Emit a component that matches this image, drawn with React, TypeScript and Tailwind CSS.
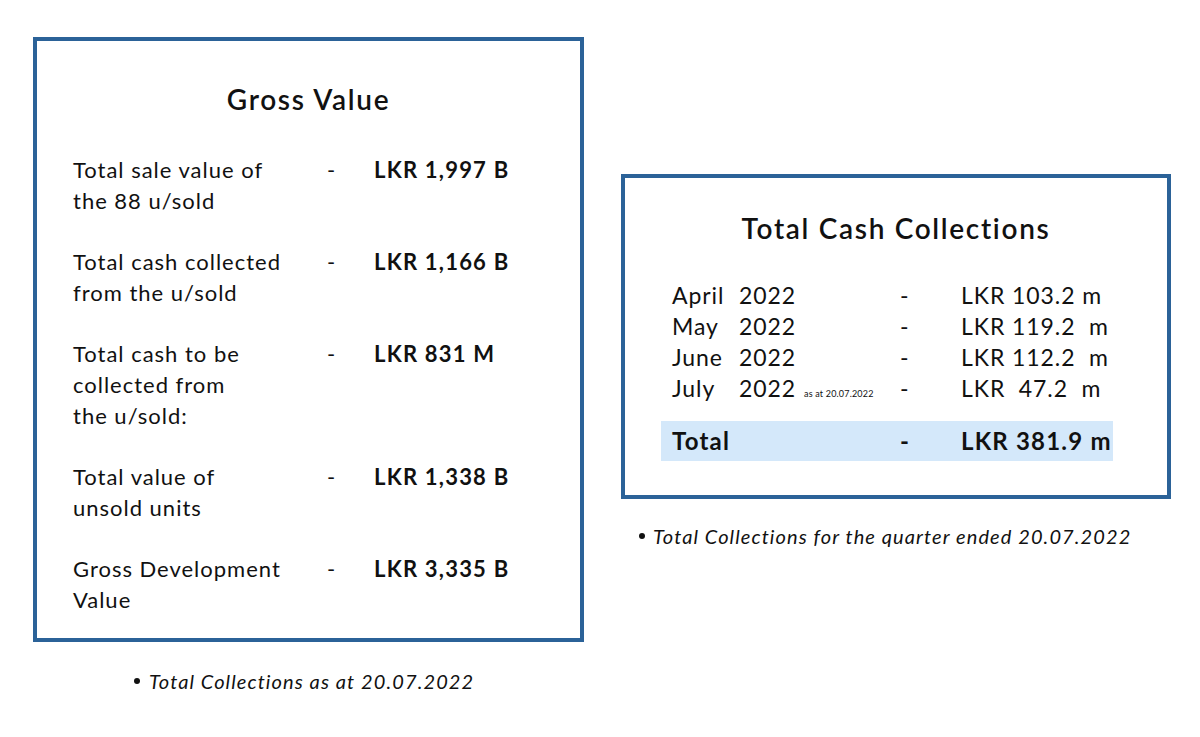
import React from "react";

const font = { fontFamily: "Lato, 'Open Sans', sans-serif" };

const grossRows: { label: string[]; value: string }[] = [
  { label: ["Total sale value of", "the 88 u/sold"], value: "LKR 1,997 B" },
  { label: ["Total cash collected", "from the u/sold"], value: "LKR 1,166 B" },
  { label: ["Total cash to be", "collected from", "the u/sold:"], value: "LKR 831 M" },
  { label: ["Total value of", "unsold units"], value: "LKR 1,338 B" },
  { label: ["Gross Development", "Value"], value: "LKR 3,335 B" },
];

const months: { m: string; note?: string; v: string }[] = [
  { m: "April", v: "LKR 103.2 m" },
  { m: "May", v: "LKR 119.2  m" },
  { m: "June", v: "LKR 112.2  m" },
  { m: "July", note: "as at 20.07.2022", v: "LKR  47.2  m" },
];

export default function App() {
  return (
    <div className="w-[1200px] h-[737px] bg-white flex text-[#111]" style={font}>
      <div className="pl-[33px] pt-[37px] flex flex-col">
        <div className="w-[551px] h-[605px] border-4 border-[#2b6298] pt-[41px] pl-[36px]">
          <h2 className="-ml-[36px] text-[28px] leading-[34px] font-semibold text-center tracking-[0.06em]">
            Gross Value
          </h2>
          <div className="mt-[38px] flex flex-col gap-[30px]">
            {grossRows.map((r) => (
              <div key={r.value} className="grid grid-cols-[254px_47px_1fr] text-[22px] leading-[31px] tracking-[0.045em]">
                <div>
                  {r.label.map((l) => (
                    <div key={l}>{l}</div>
                  ))}
                </div>
                <div>-</div>
                <div className="font-bold tracking-[0.055em]">{r.value}</div>
              </div>
            ))}
          </div>
        </div>
        <div className="mt-[26px] pl-[101px] text-[20px] leading-[26px] italic tracking-[0.055em] flex items-center">
          <span className="inline-block w-[6px] h-[6px] rounded-full bg-[#111] mr-[9px]" />
          <span>Total Collections as at 20.07.2022</span>
        </div>
      </div>
      <div className="ml-[37px] pt-[174px] flex flex-col">
        <div className="w-[550px] h-[325px] border-4 border-[#2b6298] pt-[33px]">
          <h2 className="text-[28px] leading-[35px] font-semibold text-center tracking-[0.06em]">Total Cash Collections</h2>
          <div className="mt-[34px] ml-[36px] w-[452px]">
            {months.map((r) => (
              <div key={r.m} className="grid grid-cols-[67px_161px_61px_1fr] pl-[11px] text-[23px] leading-[31px] tracking-[0.04em] whitespace-nowrap">
                <div>{r.m}</div>
                <div className="flex items-baseline">
                  <span>2022</span>
                  {r.note && <span className="ml-[8px] text-[9px] leading-[10px] tracking-[0.02em]">{r.note}</span>}
                </div>
                <div>-</div>
                <div className="whitespace-pre">{r.v}</div>
              </div>
            ))}
            <div className="mt-[17px] h-[40px] bg-[#d4e8fa] grid grid-cols-[228px_61px_1fr] items-center pl-[11px] text-[24px] font-bold tracking-[0.05em] whitespace-nowrap">
              <div>Total</div>
              <div>-</div>
              <div>LKR 381.9 m</div>
            </div>
          </div>
        </div>
        <div className="mt-[24px] pl-[18px] text-[20px] leading-[26px] italic tracking-[0.055em] flex items-center">
          <span className="inline-block w-[6px] h-[6px] rounded-full bg-[#111] mr-[8px]" />
          <span>Total Collections for the quarter ended 20.07.2022</span>
        </div>
      </div>
    </div>
  );
}
